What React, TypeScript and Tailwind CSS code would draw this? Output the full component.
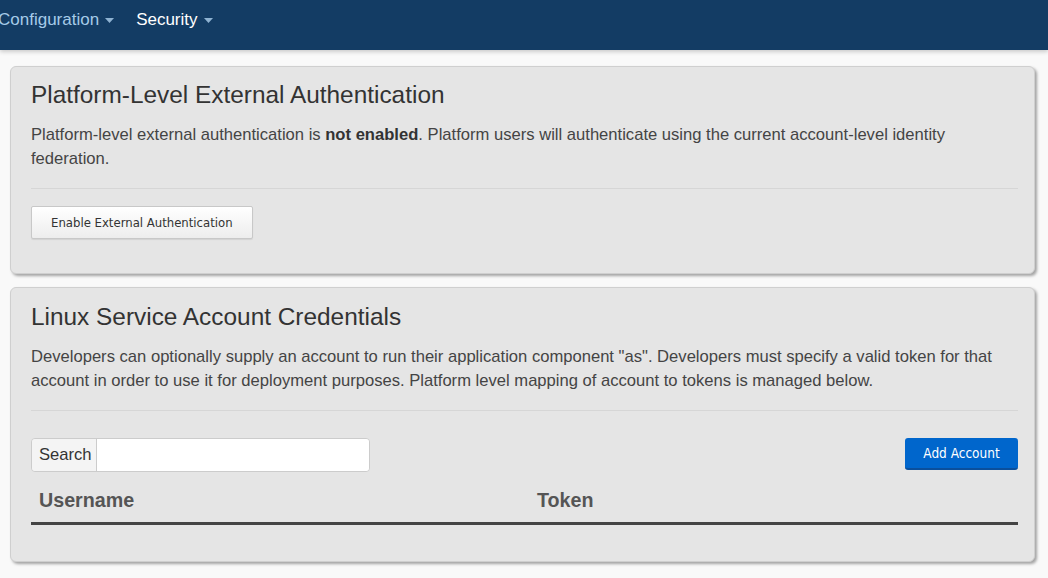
import React from 'react';

function Caret({ className }: { className?: string }) {
  return (
    <svg width="9" height="5" viewBox="0 0 9 5" className={className}>
      <path d="M0 0 L9 0 L4.5 5 Z" fill="currentColor" />
    </svg>
  );
}

function Card({ children }: { children: React.ReactNode }) {
  return (
    <div className="w-[1025px] rounded-[6px] border border-[#cfcfcf] bg-[#e5e5e5] pl-[20px] pr-[16px] shadow-[2px_2px_3px_rgba(0,0,0,0.35)]">
      {children}
    </div>
  );
}

export default function App() {
  return (
    <div className="min-h-[578px] bg-[#f9f9f9] font-['Liberation_Sans',Arial,sans-serif] text-[#333]">
      <div className="relative z-10 flex h-[50px] items-start bg-[#133c64] shadow-[0_2px_4px_rgba(0,0,0,0.18)]">
        <div className="flex h-[40px] items-center text-[17px]">
          <span className="-ml-[2px] text-[#a6cbe8]">Configuration</span>
          <Caret className="ml-[6px] mt-[1px] text-[#8fb3d2]" />
          <span className="ml-[22px] text-white">Security</span>
          <Caret className="ml-[6px] mt-[1px] text-[#8fb3d2]" />
        </div>
      </div>

      <div className="flex flex-col gap-[13px] pl-[10px] pt-[16px]">
        <Card>
          <h2 className="mt-[15px] text-[24.4px] leading-[26px] text-[#333]">Platform-Level External Authentication</h2>
          <p className="mt-[15px] text-[16.6px] leading-[24px] text-[#444]">
            Platform-level external authentication is <b className="text-[#333]">not enabled</b>. Platform users will authenticate using the current account-level identity federation.
          </p>
          <hr className="mt-[17px] border-t border-[#d6d6d6]" />
          <button className="mt-[17px] mb-[34px] h-[33px] rounded-[2px] border border-[#c8c8c8] bg-gradient-to-b from-white to-[#ededed] px-[19px] font-['DejaVu_Sans_Condensed','DejaVu_Sans',sans-serif] text-[13px] text-[#333] shadow-[0_1px_1px_rgba(0,0,0,0.08)]">
            Enable External Authentication
          </button>
        </Card>

        <Card>
          <h2 className="mt-[16px] text-[24.4px] leading-[26px] text-[#333]">Linux Service Account Credentials</h2>
          <p className="mt-[15px] text-[16.6px] leading-[24px] text-[#444]">
            Developers can optionally supply an account to run their application component "as". Developers must specify a valid token for that account in order to use it for deployment purposes. Platform level mapping of account to tokens is managed below.
          </p>
          <hr className="mt-[17px] border-t border-[#d6d6d6]" />
          <div className="mt-[27px] flex items-start justify-between">
            <div className="flex h-[34px] w-[339px] overflow-hidden rounded-[4px] border border-[#cccccc]">
              <span className="flex w-[65px] items-center border-r border-[#cccccc] bg-[#f4f4f4] pl-[7px] text-[16.6px] text-[#333]">Search</span>
              <input className="flex-1 bg-white outline-none" />
            </div>
            <button className="h-[32px] w-[113px] rounded-[3px] border-b-[2px] border-[#0a4f9c] bg-[#0066cc] font-['DejaVu_Sans_Condensed','DejaVu_Sans',sans-serif] text-[13.5px] text-white">
              Add Account
            </button>
          </div>
          <div className="mt-[8px] mb-[36px] flex h-[45px] items-center border-b-[3px] border-[#444] text-[19.7px] font-bold text-[#555]">
            <div className="w-[498px] pl-[8px]">Username</div>
            <div className="pl-[8px]">Token</div>
          </div>
        </Card>
      </div>
    </div>
  );
}
